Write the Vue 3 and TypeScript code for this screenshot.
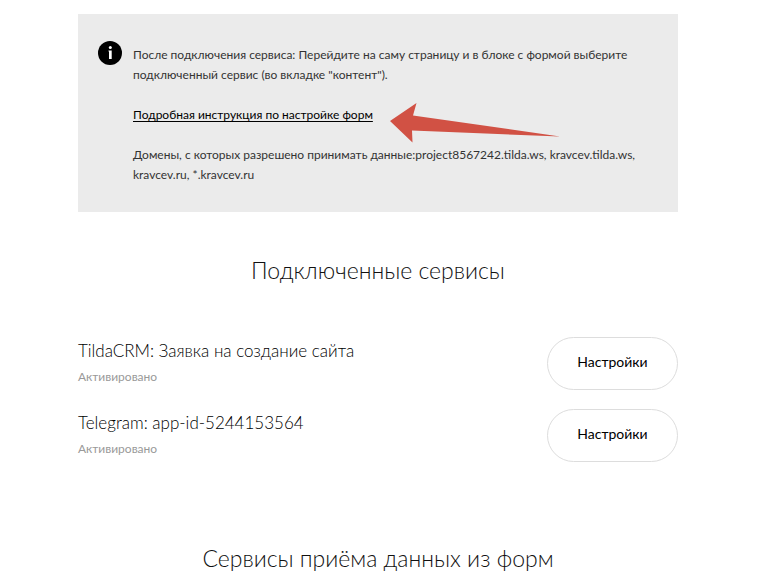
<script setup lang="ts">
interface Service {
  id: number
  title: string
  status: string
}

const services: Service[] = [
  { id: 1, title: 'TildaCRM: Заявка на создание сайта', status: 'Активировано' },
  { id: 2, title: 'Telegram: app-id-5244153564', status: 'Активировано' },
]
</script>

<template>
  <main class="page">
    <section class="notice">
      <svg class="info-icon" viewBox="0 0 24 24" aria-hidden="true">
        <circle cx="12" cy="12" r="12" fill="#000" />
        <circle cx="12.300" cy="6.600" r="1.500" fill="#fff" />
        <path d="M10.500 9.500h3.200V18H11v-7.500h-.5z" fill="#fff" />
      </svg>
      <div class="notice-text">
        <p>
          После подключения сервиса: Перейдите на саму страницу и в блоке с формой выберите<br />
          подключенный сервис (во вкладке "контент").
        </p>
        <p class="guide">
          <a href="#">Подробная инструкция по настройке форм</a>
          <svg class="arrow" viewBox="0 0 170 40" aria-hidden="true">
            <path d="M0 18 26.500 0 23 12.500 170 33.500 22 27.500 22.500 39.500z" fill="#d15144" />
          </svg>
        </p>
        <p>
          Домены, с которых разрешено принимать данные:project8567242.tilda.ws, kravcev.tilda.ws,<br />
          kravcev.ru, *.kravcev.ru
        </p>
      </div>
    </section>

    <h2>Подключенные сервисы</h2>

    <ul class="services">
      <li v-for="service in services" :key="service.id" class="service">
        <div>
          <h3>{{ service.title }}</h3>
          <p class="status">{{ service.status }}</p>
        </div>
        <button type="button" class="settings">Настройки</button>
      </li>
    </ul>

    <h2>Сервисы приёма данных из форм</h2>
  </main>
</template>

<style>
body {
  background: #fff;
}
</style>

<style scoped>
.page {
  box-sizing: border-box;
  max-width: 600px;
  margin: 0 auto;
  padding-top: 14px;
  position: relative;
  right: 4px;
  font-family: Lato, "Open Sans", sans-serif;
  font-weight: 400;
  color: #333;
}

.notice {
  display: flex;
  gap: 11px;
  padding: 31px 20px 27px;
  background: #ebebeb;
}

.info-icon {
  flex: none;
  width: 24px;
  height: 24px;
  margin-top: -4px;
}

.notice-text {
  min-width: 0;
  font-size: 12px;
  line-height: 20px;
  white-space: nowrap;
}

p,
h2,
h3 {
  margin: 0;
}

.notice-text p + p {
  margin-top: 20px;
}

.guide {
  position: relative;
}

.guide a {
  color: #000;
  text-decoration: underline;
  text-underline-offset: 2px;
}

.arrow {
  position: absolute;
  left: 257px;
  top: -2px;
  width: 170px;
  height: 40px;
}

h2 {
  margin-top: 41px;
  font-size: 23px;
  font-weight: 300;
  line-height: 34px;
  text-align: center;
  color: #111;
}

.services {
  display: flex;
  flex-direction: column;
  gap: 19px;
  margin: 50px 0 0;
  padding: 0 0 38px;
  list-style: none;
}

.service {
  display: flex;
  justify-content: space-between;
  align-items: flex-start;
}

h3 {
  font-size: 17px;
  font-weight: 300;
  line-height: 27px;
  color: #000;
}

.status {
  font-size: 12px;
  line-height: 26px;
  color: #999;
}

.settings {
  box-sizing: border-box;
  width: 131px;
  height: 53px;
  padding: 0 0 4px;
  border: 1px solid #ddd;
  border-radius: 27px;
  background: #fff;
  font: inherit;
  font-size: 14px;
  color: #000;
}
</style>
